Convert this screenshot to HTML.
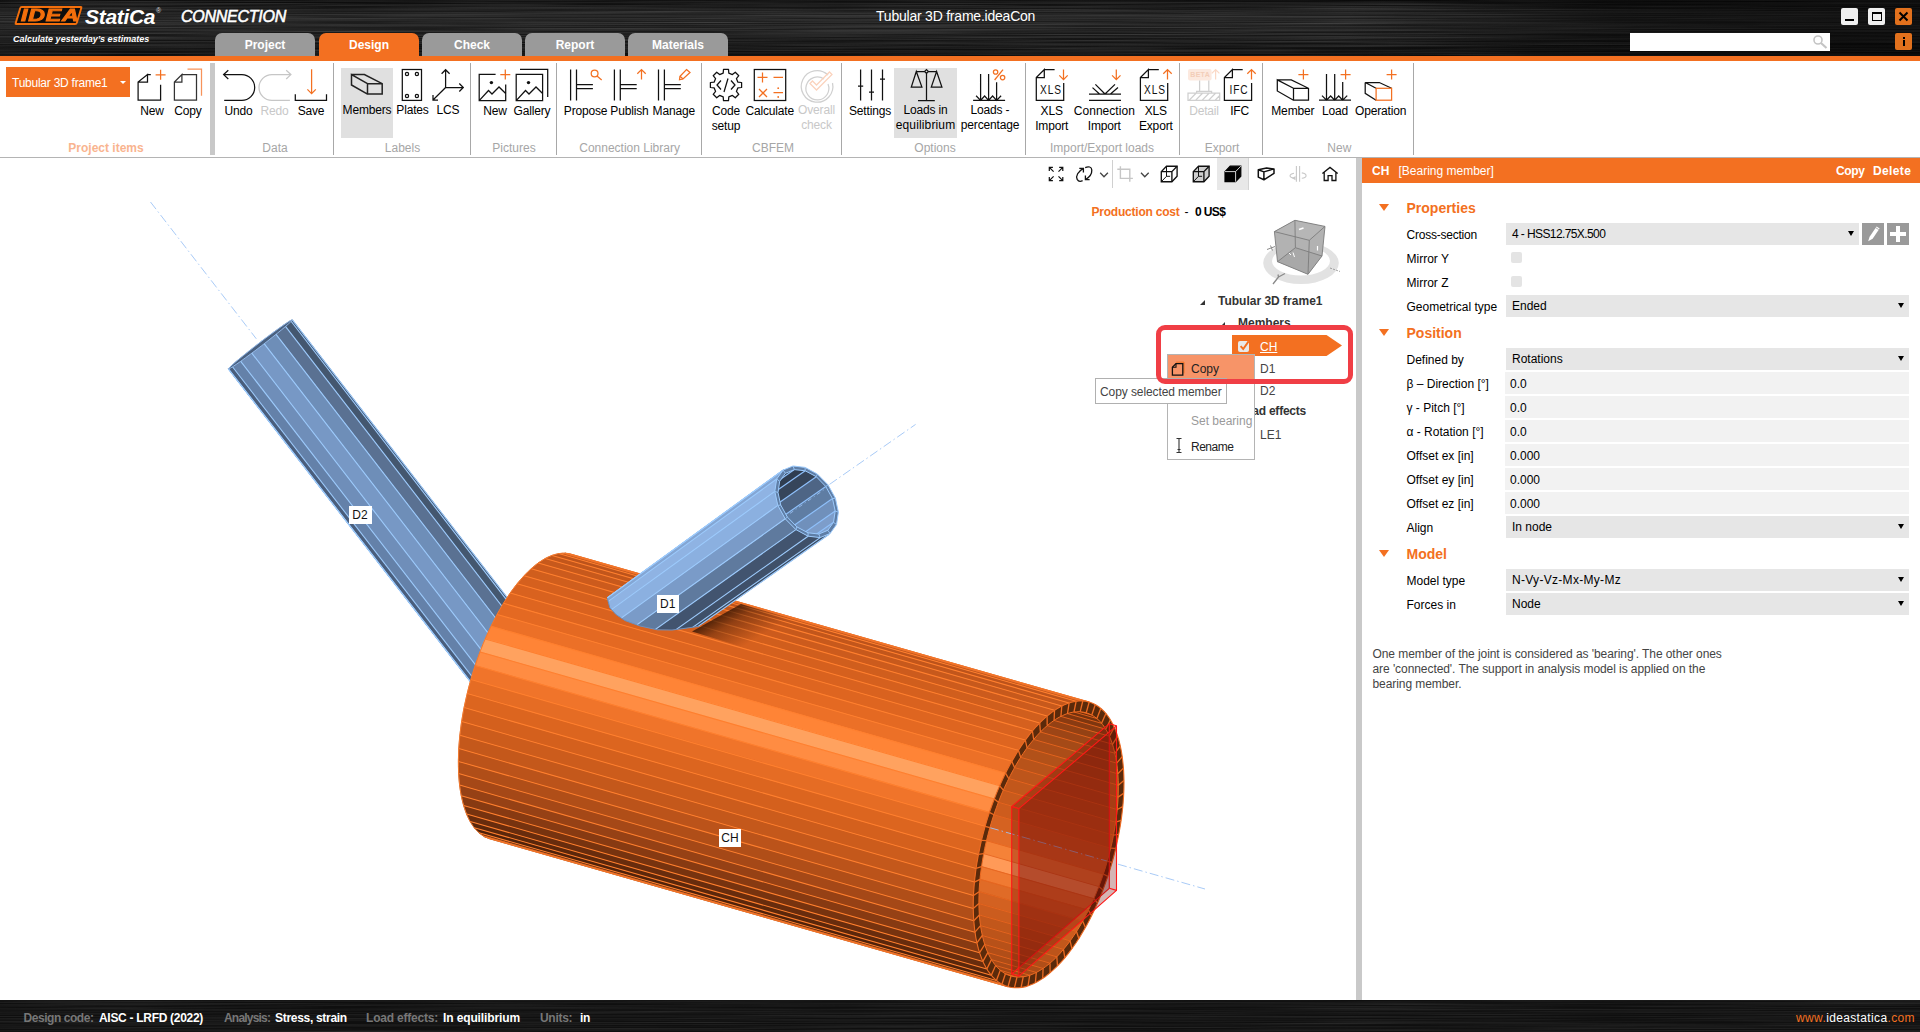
<!DOCTYPE html>
<html lang="en">
<head>
<meta charset="utf-8">
<title>Tubular 3D frame.ideaCon</title>
<style>
*{box-sizing:border-box;margin:0;padding:0}
html,body{width:1920px;height:1032px;overflow:hidden;background:#fff}
body{font-family:"Liberation Sans",sans-serif;font-size:12px;color:#000;position:relative}
.abs{position:absolute}
.t{position:absolute;white-space:nowrap;line-height:14px}
svg{position:absolute;overflow:visible}
/* header */
#hdr{position:absolute;left:0;top:0;width:1920px;height:56px;background:#171717;overflow:hidden}
#oline{position:absolute;left:0;top:56px;width:1920px;height:5px;background:#f37021}
.tab{position:absolute;top:33px;height:23px;width:100px;background:#9a9a9a;border-radius:7px 7px 0 0;color:#fff;font-weight:bold;font-size:12px;text-align:center;line-height:24px}
.tab.on{background:#f37021}
/* ribbon */
#rib{position:absolute;left:0;top:61px;width:1920px;height:96px;background:#fff}
#ribline{position:absolute;left:0;top:157px;width:1920px;height:1px;background:#b4b4b4}
.sep{position:absolute;top:63px;height:92px;width:1px;background:#a8a8a8}
.lbl{position:absolute;white-space:nowrap;line-height:15px;font-size:12px;letter-spacing:-0.17px;text-align:center;color:#000;transform:translateX(-50%)}
.lbl.dis{color:#c8c8c8}
.grp{position:absolute;white-space:nowrap;line-height:14px;font-size:12px;color:#a6a6a6;top:141px;transform:translateX(-50%)}
/* status */
#stat{position:absolute;left:0;top:1000px;width:1920px;height:32px;background:#101010;overflow:hidden}
#stat .t{top:11px;font-weight:bold;font-size:12px;letter-spacing:-0.3px}
/* right panel */
#split{position:absolute;left:1356px;top:158px;width:6px;height:842px;background:#c9c9c9}
#rp{position:absolute;left:1362px;top:158px;width:558px;height:842px;background:#fff}
#rph{position:absolute;left:0;top:0;width:558px;height:25px;background:#f37021;color:#fff}

#rp .l{position:absolute;left:44.5px;margin-top:1px;white-space:nowrap;line-height:14px;font-size:12px;color:#000}
#rp .f{position:absolute;left:144px;width:403px;height:22px;background:#e6e6e6}
#rp .f.n{left:143px;width:404px;background:#f2f2f2}
#rp .f span{position:absolute;left:6px;top:3.5px;line-height:14px;white-space:nowrap}
#rp .f.n span{left:5px;top:4.5px}
#rp .f i{position:absolute;right:5px;top:8px;width:0;height:0;border-left:3.5px solid transparent;border-right:3.5px solid transparent;border-top:5px solid #000}
#rp .h{position:absolute;left:44.5px;white-space:nowrap;font-size:14px;line-height:16px;font-weight:bold;color:#f37021}
#rp .tri{position:absolute;left:17px;width:0;height:0;border-left:5.5px solid transparent;border-right:5.5px solid transparent;border-top:7px solid #f37021}
#rp .cb{position:absolute;left:149px;width:11px;height:11px;border-radius:2px;background:#e4e4e4}
</style>
</head>
<body>
<div id="hdr">
<svg width="1920" height="56" style="left:0;top:0"><defs>
<filter id="brush" x="0" y="0" width="100%" height="100%"><feTurbulence type="fractalNoise" baseFrequency="0.004 0.85" numOctaves="3" seed="7" result="n"/><feColorMatrix type="matrix" values="0 0 0 0 1  0 0 0 0 1  0 0 0 0 1  0.9 0 0 0 -0.28"/></filter>
<linearGradient id="hg" x1="0" y1="0" x2="0" y2="1"><stop offset="0" stop-color="#0a0a0a"/><stop offset="0.25" stop-color="#1e1e1e"/><stop offset="0.5" stop-color="#1c1c1c"/><stop offset="0.8" stop-color="#111"/><stop offset="1" stop-color="#0c0c0c"/></linearGradient>
<linearGradient id="hx" x1="0" y1="0" x2="1" y2="0"><stop offset="0" stop-color="#000" stop-opacity="0"/><stop offset="0.7" stop-color="#000" stop-opacity="0"/><stop offset="0.85" stop-color="#000" stop-opacity="0.45"/><stop offset="1" stop-color="#000" stop-opacity="0.55"/></linearGradient>
</defs>
<rect width="1920" height="56" fill="url(#hg)"/>
<rect width="1920" height="56" filter="url(#brush)" opacity="0.3"/>
<rect width="1920" height="56" fill="url(#hx)"/>
</svg>
<!-- logo -->
<div class="abs" style="left:17px;top:6px;width:63px;height:19px;border:2px solid #f36f0c;border-radius:2px;transform:skewX(-17deg);background:#0d0d0d"></div>
<div class="t" style="left:20.5px;top:6px;font-size:17px;line-height:19px;font-weight:bold;font-style:italic;color:#f36f0c;-webkit-text-stroke:0.9px #f36f0c;letter-spacing:0.6px;transform-origin:0 0;transform:scaleX(1.36)">IDEA</div>
<div class="t" style="left:85px;top:4.5px;font-size:21px;line-height:24px;font-weight:bold;font-style:italic;color:#fff;letter-spacing:-0.3px">StatiCa</div>
<div class="t" style="left:156px;top:7px;font-size:7px;line-height:8px;color:#ddd">®</div>
<div class="t" style="left:181px;top:8px;font-size:16px;line-height:18px;font-style:italic;color:#fff;letter-spacing:-0.25px;-webkit-text-stroke:0.55px #fff">CONNECTION</div>
<div class="t" style="left:13px;top:34px;font-size:9px;line-height:11px;font-style:italic;font-weight:bold;color:#fff;letter-spacing:0.01px">Calculate yesterday’s estimates</div>
<!-- tabs -->
<div class="tab" style="left:215px">Project</div>
<div class="tab on" style="left:319px">Design</div>
<div class="tab" style="left:422px">Check</div>
<div class="tab" style="left:525px">Report</div>
<div class="tab" style="left:628px">Materials</div>
<div class="t" style="left:876px;top:8px;font-size:14px;line-height:16px;color:#fff;letter-spacing:-0.22px">Tubular 3D frame.ideaCon</div>
<!-- window buttons -->
<div class="abs" style="left:1841px;top:8px;width:17px;height:17px;background:#efefef;border-radius:2px"><div class="abs" style="left:4px;top:11px;width:9px;height:2px;background:#000"></div></div>
<div class="abs" style="left:1868px;top:8px;width:17px;height:17px;background:#efefef;border-radius:2px"><div class="abs" style="left:4px;top:4px;width:10px;height:9px;border:1.5px solid #000;border-top-width:2.5px"></div></div>
<div class="abs" style="left:1895px;top:8px;width:17px;height:17px;background:#e2711d;border-radius:2px"><svg width="17" height="17" style="left:0;top:0"><path d="M4.5 4.5 L12.5 12.5 M12.5 4.5 L4.5 12.5" stroke="#000" stroke-width="2" fill="none"/></svg></div>
<div class="abs" style="left:1630px;top:33px;width:200px;height:18px;background:#fff"></div>
<svg width="20" height="18" style="left:1810px;top:33px"><circle cx="8" cy="7" r="4" fill="none" stroke="#c4c4c4" stroke-width="1.6"/><path d="M11 10 L16.5 15" stroke="#c4c4c4" stroke-width="2.2"/></svg>
<div class="abs" style="left:1895px;top:33px;width:17px;height:17px;background:#e2711d;border-radius:2px"><div class="abs" style="left:7.5px;top:4px;width:2px;height:2px;background:#000"></div><div class="abs" style="left:7.5px;top:7px;width:2px;height:6px;background:#000"></div></div>
</div>
<div id="oline"></div>
<div id="rib"></div>
<div class="abs" style="left:341px;top:68px;width:52px;height:70px;background:#e0e0e0"></div>
<div class="abs" style="left:894px;top:68px;width:63px;height:70px;background:#e0e0e0"></div>
<div class="abs" style="left:6px;top:67px;width:124px;height:30px;background:#f37021"></div>
<div class="t" style="left:12px;top:76px;color:#fff;font-size:12px;letter-spacing:-0.24px">Tubular 3D frame1</div>
<div class="abs" style="left:119.5px;top:80.5px;width:0;height:0;border-left:3px solid transparent;border-right:3px solid transparent;border-top:3.5px solid #fff"></div>
<div class="abs" style="left:210px;top:63px;width:5px;height:92px;background:#c8c8c8"></div>
<div class="sep" style="left:333px"></div>
<div class="sep" style="left:470px"></div>
<div class="sep" style="left:556px"></div>
<div class="sep" style="left:701px"></div>
<div class="sep" style="left:841px"></div>
<div class="sep" style="left:1025px"></div>
<div class="sep" style="left:1179px"></div>
<div class="sep" style="left:1262px"></div>
<div class="sep" style="left:1413px"></div>
<div class="lbl" style="left:152px;top:103.5px">New</div>
<div class="lbl" style="left:188px;top:103.5px">Copy</div>
<div class="lbl" style="left:238.4px;top:103.5px">Undo</div>
<div class="lbl dis" style="left:274.5px;top:103.5px">Redo</div>
<div class="lbl" style="left:311px;top:103.5px">Save</div>
<div class="lbl" style="left:367px;top:102.5px">Members</div>
<div class="lbl" style="left:412.5px;top:102.5px">Plates</div>
<div class="lbl" style="left:448px;top:102.5px">LCS</div>
<div class="lbl" style="left:495px;top:103.5px">New</div>
<div class="lbl" style="left:532px;top:103.5px">Gallery</div>
<div class="lbl" style="left:585.6px;top:103.5px">Propose</div>
<div class="lbl" style="left:629.4px;top:103.5px">Publish</div>
<div class="lbl" style="left:673.8px;top:103.5px">Manage</div>
<div class="lbl" style="left:726px;top:103.5px">Code<br>setup</div>
<div class="lbl" style="left:769.7px;top:103.5px">Calculate</div>
<div class="lbl dis" style="left:816.5px;top:102.5px">Overall<br>check</div>
<div class="lbl" style="left:870px;top:103.5px">Settings</div>
<div class="lbl" style="left:925.5px;top:102.5px">Loads in<br><span style="letter-spacing:0.15px">equilibrium</span></div>
<div class="lbl" style="left:990px;top:102.5px">Loads -<br>percentage</div>
<div class="lbl" style="left:1051.7px;top:103.5px">XLS<br>Import</div>
<div class="lbl" style="left:1104.3px;top:103.5px"><span style="letter-spacing:0.04px">Connection</span><br>Import</div>
<div class="lbl" style="left:1155.8px;top:103.5px">XLS<br>Export</div>
<div class="lbl dis" style="left:1204px;top:103.5px">Detail</div>
<div class="lbl" style="left:1239.6px;top:103.5px">IFC</div>
<div class="lbl" style="left:1292.8px;top:103.5px">Member</div>
<div class="lbl" style="left:1335px;top:103.5px">Load</div>
<div class="lbl" style="left:1380.6px;top:103.5px">Operation</div>
<div class="grp" style="left:106px;color:#f9b48f;font-weight:bold">Project items</div>
<div class="grp" style="left:275px;">Data</div>
<div class="grp" style="left:402.5px;">Labels</div>
<div class="grp" style="left:514px;">Pictures</div>
<div class="grp" style="left:629.6px;">Connection Library</div>
<div class="grp" style="left:773px;">CBFEM</div>
<div class="grp" style="left:935px;">Options</div>
<div class="grp" style="left:1102px;">Import/Export loads</div>
<div class="grp" style="left:1222px;">Export</div>
<div class="grp" style="left:1339.3px;">New</div>
<div class="t" style="left:1050.8px;top:82.5px;font-size:13px;line-height:14px;transform:translateX(-50%) scaleX(0.78);letter-spacing:1.2px;color:#111">XLS</div>
<div class="t" style="left:1154.8px;top:82.5px;font-size:13px;line-height:14px;transform:translateX(-50%) scaleX(0.78);letter-spacing:1.2px;color:#111">XLS</div>
<div class="t" style="left:1238.8px;top:82.5px;font-size:13px;line-height:14px;transform:translateX(-50%) scaleX(0.78);letter-spacing:1.2px;color:#111">IFC</div>
<div class="t" style="left:1190.3px;top:71px;font-size:7px;line-height:8px;font-weight:bold;color:#f3cdb8;letter-spacing:0.3px;z-index:3">BETA</div>
<svg width="1920" height="100" style="left:0;top:61px" viewBox="0 61 1920 100" fill="none" stroke="#111" stroke-width="1.25" stroke-linejoin="miter">
<path d="M147.5 74.5H150.8M160.6 84.8V100.1H138.1V82L147.5 74.5V82H138.1"/><path d="M155.6 74.8H165.6M160.6 69.8V79.8" stroke="#f37021"/>
<path d="M181.9 74.5H196.5V100.1H174.4V82L181.9 74.5V82H174.4" stroke="#333"/><path d="M187.5 69.2H201.5V95.8" stroke="#f7935a"/>
<path d="M228.3 70.2L223.6 74.6L228.3 79M223.6 74.6H241.8A12.9 12.9 0 0 1 241.8 100.4H224.2"/>
<path d="M286.2 70.2L290.9 74.6L286.2 79M290.9 74.6H271.9A12.9 12.9 0 0 0 271.9 100.4H289.9" stroke="#c6c6c6"/>
<path d="M311.6 69.2V93.6M307.40000000000003 89.39999999999999L311.6 93.6L315.8 89.39999999999999" stroke="#f37021"/><path d="M295.3 94.3V100.4H326.5V94.3"/>
<path d="M351.5 74.6H364.4L382.2 83.7V94.1H367.5V83.7H382.2M367.5 83.7L351.5 74.6V85L367.5 94.1" stroke-width="1.5" stroke="#222"/>
<rect x="402.3" y="69.5" width="19.2" height="30.9"/><circle cx="407" cy="74" r="1.6"/><circle cx="416.9" cy="74" r="1.6"/><circle cx="407" cy="95.9" r="1.6"/><circle cx="416.9" cy="95.9" r="1.6"/>
<path d="M445.6 87.5V69.7M441.6 73.7L445.6 69.7L449.6 73.7M445.6 87.5H463.3M459.3 83.5L463.3 87.5L459.3 91.5M445.6 87.5L433 100M433 95V100H438"/>
<path d="M495.6 74.4H479.2V100.6H505.7V84.5M479.2 100.6L488.5 90.5L492 94L499 87L505.7 93.5"/><circle cx="491.4" cy="82.6" r="1.7" fill="#111" stroke="none"/><path d="M500.3 74.6H510.3M505.3 69.6V79.6" stroke="#f37021"/>
<path d="M516.2 74.4H542.6V100.6H516.2ZM516.2 100.6L525.5 90.5L529 94L536 87L542.6 93.5M520 69.4H547.7V96.9"/><circle cx="528.5" cy="82.6" r="1.7" fill="#111" stroke="none"/>
<path d="M570.6 69.4V100.6M576.5 69.4V100.6M576.5 84.6H592.9M576.5 88.5H592.9"/>
<path d="M614.4 69.4V100.6M620.3 69.4V100.6M620.3 84.6H636.6999999999999M620.3 88.5H636.6999999999999"/>
<path d="M658.5 69.4V100.6M664.4 69.4V100.6M664.4 84.6H680.8M664.4 88.5H680.8"/>
<circle cx="594.6" cy="73.4" r="3.4" stroke="#f37021"/><path d="M597 76L601.7 80" stroke="#f37021"/>
<path d="M641.5 79.6V69.6M637.3 73.8L641.5 69.6L645.7 73.8" stroke="#f37021"/>
<path d="M686.5 69.6L690 72.5L683 79L679.5 79.8L680 76.2Z" stroke="#f37021"/><path d="M680 76.2L683 79" stroke="#f37021"/>
<path d="M723.2 73.1L723.5 69.4L728.5 69.4L728.8 73.1L732.4 74.6L735.3 72.2L738.8 75.7L736.4 78.6L737.9 82.2L741.6 82.5L741.6 87.5L737.9 87.8L736.4 91.4L738.8 94.3L735.3 97.8L732.4 95.4L728.8 96.9L728.5 100.6L723.5 100.6L723.2 96.9L719.6 95.4L716.7 97.8L713.2 94.3L715.6 91.4L714.1 87.8L710.4 87.5L710.4 82.5L714.1 82.2L715.6 78.6L713.2 75.7L716.7 72.2L719.6 74.6Z" stroke-linejoin="round"/>
<path d="M721 80.5L717 85L721 89.5M731 80.5L735 85L731 89.5M728 78.5L724 92"/>
<rect x="754.3" y="69.5" width="31.4" height="31"/>
<path d="M757.5 77.4H767.5M762.5 72.4V82.4M773.5 77.4H783M759 89L767 97M767 89L759 97M773.5 92.6H783" stroke="#f37021"/><circle cx="778.2" cy="88.2" r="0.9" fill="#f37021" stroke="none"/><circle cx="778.2" cy="97" r="0.9" fill="#f37021" stroke="none"/>
<path d="M828 75A15.8 15.8 0 1 0 832.5 83" stroke="#d0d0d0"/><path d="M824 79A11.5 11.5 0 1 0 828 84" stroke="#d0d0d0"/><path d="M810 83.5L816.5 90L832 74.5L829.5 72L816.5 85L812.5 81Z" stroke="#fbd3bd"/>
<path d="M860.6 69.4V100.6M871.5 69.4V100.6M882.5 69.4V100.6M858 86H863.2M869 92H874M880 79H885" />
<path d="M916.3 71.5H924.7M928.3 71.5H936.6M926.5 73.3V100.5M918 100.5H934.8M916.3 71.5L911.3 87.1H921.9ZM936.6 71.5L931.3 87.1H941.9Z"/><path d="M926.5 69.6L928.4 71.5L926.5 73.4L924.6 71.5Z"/>
<path d="M980.6 74V100.4M988.6 74V100.4M996.6 82.2V100.4M973.1 100.4H1005.1M976.1 95.8L980.6 100.4L984.6 96L988.6 100.4L992.6 96L996.6 100.4L1001.1 95.8"/>
<circle cx="995.6" cy="72" r="2.2" stroke="#f37021"/><circle cx="1002.6" cy="77.6" r="2.2" stroke="#f37021"/><path d="M1003 69.6L994.6 80" stroke="#f37021"/>
<path d="M1044.3 69.5H1054.6M1063.7 83V100.3H1036.3V77.5L1044.3 69.5V77.5H1036.3"/>
<path d="M1063.5 69.6V79.6M1059.3 75.39999999999999L1063.5 79.6L1067.7 75.39999999999999" stroke="#f37021"/>
<path d="M1089 94H1121M1089 100.4H1121M1105 94L1095.4 84.4M1105 94L1115 84.4M1099.5 94L1092.5 87.6M1110.5 94L1118 87.6"/>
<path d="M1116.3 69.6V79.6M1112.1 75.39999999999999L1116.3 79.6L1120.5 75.39999999999999" stroke="#f37021"/>
<path d="M1148.4 69.5H1158.8M1167.7 83V100.3H1140.4V77.5L1148.4 69.5V77.5H1140.4"/>
<path d="M1167.5 79.6V69.6M1163.3 73.8L1167.5 69.6L1171.7 73.8" stroke="#f37021"/>
<rect x="1188" y="69" width="23.6" height="11.6" rx="2" fill="#fce9df" stroke="none"/>
<path d="M1215.6 79.6V69.6M1211.8 73.39999999999999L1215.6 69.6L1219.3999999999999 73.39999999999999" stroke="#fbd9c6"/>
<path d="M1199.6 80.6V91.3M1208.8 80.6V91.3M1196.6 93V91.3H1211.6V93M1188 93.2H1219.7V100.4H1188Z M1189 100.4L1196 93.2M1195.5 100.4L1202.5 93.2M1202 100.4L1209 93.2M1208.5 100.4L1215.5 93.2M1215 100.4L1219.7 95.5" stroke="#cfcfcf"/>
<path d="M1232.4 69.5H1242.7M1251.6 83V100.3H1224.4V77.5L1232.4 69.5V77.5H1224.4"/>
<path d="M1251.5 79.6V69.6M1247.3 73.8L1251.5 69.6L1255.7 73.8" stroke="#f37021"/>
<path d="M1277.3 79.9H1291.3L1308.5 88.3V100.2H1293.5V88.3H1308.5M1293.5 88.3L1277.3 79.9V91L1293.5 100.2"/><path d="M1298.4 74.5H1308.4M1303.4 69.5V79.5" stroke="#f37021"/>
<path d="M1326.5 74V100.2M1334.7 74V100.2M1342.7 82V100.2M1319 100.2H1351M1322 95.6L1326.5 100.2L1330.6 96L1334.7 100.2L1338.7 96L1342.7 100.2L1347.2 95.6"/><path d="M1340.6 74.5H1350.6M1345.6 69.5V79.5" stroke="#f37021"/>
<path d="M1376.1 88.3L1365.2 82.5H1379.3L1391.6 88.3M1365.2 82.5V93.4L1376.1 100.2"/><rect x="1376.1" y="88.3" width="15.5" height="11.9" stroke="#f37021"/><path d="M1386.6 74.5H1396.6M1391.6 69.5V79.5" stroke="#f37021"/>
</svg>
<div id="ribline"></div>
<div id="view">
<!--MODEL_START-->
<svg width="1356" height="842" viewBox="0 158 1356 842" style="left:0;top:158px;overflow:hidden" shape-rendering="auto">
<g id="d2">
<polygon points="292.3,319.8 549.3,652.0 547.5,652.7 290.5,320.5" fill="#394961" stroke="#394961" stroke-width="0.6"/>
<polygon points="290.5,320.5 547.5,652.7 541.2,656.9 284.1,324.7" fill="#44576f" stroke="#44576f" stroke-width="0.6"/>
<polygon points="284.1,324.7 541.2,656.9 531.2,664.0 274.1,331.8" fill="#5a7192" stroke="#5a7192" stroke-width="0.6"/>
<polygon points="274.1,331.8 531.2,664.0 519.1,673.1 262.0,340.8" fill="#6e8eb8" stroke="#6e8eb8" stroke-width="0.6"/>
<polygon points="262.0,340.8 519.1,673.1 506.7,682.7 249.7,350.4" fill="#7798c5" stroke="#7798c5" stroke-width="0.6"/>
<polygon points="249.7,350.4 506.7,682.7 496.0,691.3 239.0,359.1" fill="#6f8eb9" stroke="#6f8eb9" stroke-width="0.6"/>
<polygon points="239.0,359.1 496.0,691.3 488.5,697.8 231.5,365.5" fill="#6481a9" stroke="#6481a9" stroke-width="0.6"/>
<polygon points="231.5,365.5 488.5,697.8 485.5,701.0 228.4,368.8" fill="#4a5e7c" stroke="#4a5e7c" stroke-width="0.6"/>
<polygon points="228.4,368.8 485.5,701.0 485.4,701.2 228.4,369.0" fill="#40536d" stroke="#40536d" stroke-width="0.6"/>
<path d="M292.3,319.8L549.3,652.0" stroke="#9ccafc" stroke-width="1.1" fill="none"/>
<path d="M290.5,320.5L547.5,652.7" stroke="#9ccafc" stroke-width="1.1" fill="none"/>
<path d="M284.1,324.7L541.2,656.9" stroke="#9ccafc" stroke-width="1.1" fill="none"/>
<path d="M274.1,331.8L531.2,664.0" stroke="#9ccafc" stroke-width="1.1" fill="none"/>
<path d="M262.0,340.8L519.1,673.1" stroke="#9ccafc" stroke-width="1.1" fill="none"/>
<path d="M249.7,350.4L506.7,682.7" stroke="#9ccafc" stroke-width="1.1" fill="none"/>
<path d="M239.0,359.1L496.0,691.3" stroke="#9ccafc" stroke-width="1.1" fill="none"/>
<path d="M231.5,365.5L488.5,697.8" stroke="#9ccafc" stroke-width="1.1" fill="none"/>
<path d="M228.4,368.8L485.5,701.0" stroke="#9ccafc" stroke-width="1.1" fill="none"/>
<path d="M228.4,369.0L485.4,701.2" stroke="#9ccafc" stroke-width="1.1" fill="none"/>
<polygon points="292.3,319.8 291.6,319.9 290.0,320.8 287.5,322.4 284.1,324.7 280.0,327.5 275.4,330.9 270.2,334.7 264.8,338.7 259.2,343.0 253.7,347.3 248.4,351.5 243.4,355.5 239.0,359.1 235.2,362.3 232.1,365.0 229.9,367.0 228.7,368.4 228.4,369.0 229.1,368.9 230.7,368.0 233.2,366.4 236.6,364.1 240.7,361.3 245.3,357.9 250.5,354.1 255.9,350.1 261.5,345.8 267.0,341.5 272.3,337.3 277.3,333.3 281.7,329.7 285.5,326.5 288.6,323.8 290.8,321.8 292.0,320.4 292.3,319.8" fill="#4a607f" stroke="#9fc6f6" stroke-width="0.8"/>
</g>
<g id="ch">
<polygon points="571.1,554.2 1089.2,702.1 1082.8,701.0 565.1,553.2" fill="#af4b18" stroke="#af4b18" stroke-width="0.7"/>
<polygon points="565.1,553.2 1082.8,701.0 1076.1,701.3 558.7,553.6" fill="#b54e19" stroke="#b54e19" stroke-width="0.7"/>
<polygon points="558.7,553.6 1076.1,701.3 1069.1,703.0 552.1,555.4" fill="#bc531b" stroke="#bc531b" stroke-width="0.7"/>
<polygon points="552.1,555.4 1069.1,703.0 1061.8,706.0 545.2,558.5" fill="#c2561b" stroke="#c2561b" stroke-width="0.7"/>
<polygon points="545.2,558.5 1061.8,706.0 1054.5,710.3 538.2,563.0" fill="#c7591c" stroke="#c7591c" stroke-width="0.7"/>
<polygon points="538.2,563.0 1054.5,710.3 1047.1,716.0 531.2,568.7" fill="#cc5b1d" stroke="#cc5b1d" stroke-width="0.7"/>
<polygon points="531.2,568.7 1047.1,716.0 1039.7,722.9 524.1,575.7" fill="#d05e1d" stroke="#d05e1d" stroke-width="0.7"/>
<polygon points="524.1,575.7 1039.7,722.9 1032.4,731.0 517.1,583.8" fill="#d5601e" stroke="#d5601e" stroke-width="0.7"/>
<polygon points="517.1,583.8 1032.4,731.0 1025.3,740.1 510.2,593.1" fill="#d9621f" stroke="#d9621f" stroke-width="0.7"/>
<polygon points="510.2,593.1 1025.3,740.1 1018.4,750.3 503.5,603.3" fill="#de6520" stroke="#de6520" stroke-width="0.7"/>
<polygon points="503.5,603.3 1018.4,750.3 1011.8,761.3 497.1,614.4" fill="#e46922" stroke="#e46922" stroke-width="0.7"/>
<polygon points="497.1,614.4 1011.8,761.3 1005.5,773.2 491.0,626.3" fill="#ec7027" stroke="#ec7027" stroke-width="0.7"/>
<polygon points="491.0,626.3 1005.5,773.2 999.7,785.8 485.2,638.9" fill="#ff8436" stroke="#ff8436" stroke-width="0.7"/>
<polygon points="485.2,638.9 999.7,785.8 994.3,798.9 480.0,652.0" fill="#ffa25f" stroke="#ffa25f" stroke-width="0.7"/>
<polygon points="480.0,652.0 994.3,798.9 989.4,812.4 475.1,665.6" fill="#ff8c42" stroke="#ff8c42" stroke-width="0.7"/>
<polygon points="475.1,665.6 989.4,812.4 985.1,826.3 470.9,679.5" fill="#f0742a" stroke="#f0742a" stroke-width="0.7"/>
<polygon points="470.9,679.5 985.1,826.3 981.5,840.3 467.2,693.5" fill="#e56c24" stroke="#e56c24" stroke-width="0.7"/>
<polygon points="467.2,693.5 981.5,840.3 978.4,854.4 464.1,707.6" fill="#dc651f" stroke="#dc651f" stroke-width="0.7"/>
<polygon points="464.1,707.6 978.4,854.4 976.1,868.4 461.7,721.5" fill="#d4601d" stroke="#d4601d" stroke-width="0.7"/>
<polygon points="461.7,721.5 976.1,868.4 974.4,882.1 459.9,735.2" fill="#cc5c1c" stroke="#cc5c1c" stroke-width="0.7"/>
<polygon points="459.9,735.2 974.4,882.1 973.5,895.5 458.8,748.6" fill="#c4581b" stroke="#c4581b" stroke-width="0.7"/>
<polygon points="458.8,748.6 973.5,895.5 973.3,908.4 458.4,761.4" fill="#bb531a" stroke="#bb531a" stroke-width="0.7"/>
<polygon points="458.4,761.4 973.3,908.4 973.8,920.7 458.6,773.6" fill="#b04e18" stroke="#b04e18" stroke-width="0.7"/>
<polygon points="458.6,773.6 973.8,920.7 975.0,932.2 459.6,785.1" fill="#a54817" stroke="#a54817" stroke-width="0.7"/>
<polygon points="459.6,785.1 975.0,932.2 976.9,942.9 461.3,795.7" fill="#964115" stroke="#964115" stroke-width="0.7"/>
<polygon points="461.3,795.7 976.9,942.9 979.6,952.7 463.6,805.4" fill="#873a12" stroke="#873a12" stroke-width="0.7"/>
<polygon points="463.6,805.4 979.6,952.7 982.9,961.4 466.6,814.0" fill="#77330f" stroke="#77330f" stroke-width="0.7"/>
<polygon points="466.6,814.0 982.9,961.4 986.8,969.0 470.2,821.5" fill="#682c0d" stroke="#682c0d" stroke-width="0.7"/>
<polygon points="470.2,821.5 986.8,969.0 991.3,975.3 474.3,827.7" fill="#5b270b" stroke="#5b270b" stroke-width="0.7"/>
<polygon points="474.3,827.7 991.3,975.3 996.4,980.4 479.0,832.8" fill="#50220a" stroke="#50220a" stroke-width="0.7"/>
<polygon points="479.0,832.8 996.4,980.4 1001.9,984.3 484.2,836.5" fill="#491f09" stroke="#491f09" stroke-width="0.7"/>
<polygon points="484.2,836.5 1001.9,984.3 1008.0,986.7 489.9,838.8" fill="#461e08" stroke="#461e08" stroke-width="0.7"/>
<path d="M571.1,554.2L1089.2,702.1" stroke="#ff7f2e" stroke-width="1.05" fill="none"/>
<path d="M565.1,553.2L1082.8,701.0" stroke="#ff7f2e" stroke-width="1.05" fill="none"/>
<path d="M558.7,553.6L1076.1,701.3" stroke="#ff7f2e" stroke-width="1.05" fill="none"/>
<path d="M552.1,555.4L1069.1,703.0" stroke="#ff7f2e" stroke-width="1.05" fill="none"/>
<path d="M545.2,558.5L1061.8,706.0" stroke="#ff7f2e" stroke-width="1.05" fill="none"/>
<path d="M538.2,563.0L1054.5,710.3" stroke="#ff7f2e" stroke-width="1.05" fill="none"/>
<path d="M531.2,568.7L1047.1,716.0" stroke="#ff7f2e" stroke-width="1.05" fill="none"/>
<path d="M524.1,575.7L1039.7,722.9" stroke="#ff7f2e" stroke-width="1.05" fill="none"/>
<path d="M517.1,583.8L1032.4,731.0" stroke="#ff7f2e" stroke-width="1.05" fill="none"/>
<path d="M510.2,593.1L1025.3,740.1" stroke="#ff7f2e" stroke-width="1.05" fill="none"/>
<path d="M503.5,603.3L1018.4,750.3" stroke="#ff7f2e" stroke-width="1.05" fill="none"/>
<path d="M497.1,614.4L1011.8,761.3" stroke="#ff7f2e" stroke-width="1.05" fill="none"/>
<path d="M491.0,626.3L1005.5,773.2" stroke="#ff7f2e" stroke-width="1.05" fill="none"/>
<path d="M485.2,638.9L999.7,785.8" stroke="#ff7f2e" stroke-width="1.05" fill="none"/>
<path d="M480.0,652.0L994.3,798.9" stroke="#ff7f2e" stroke-width="1.05" fill="none"/>
<path d="M475.1,665.6L989.4,812.4" stroke="#ff7f2e" stroke-width="1.05" fill="none"/>
<path d="M470.9,679.5L985.1,826.3" stroke="#ff7f2e" stroke-width="1.05" fill="none"/>
<path d="M467.2,693.5L981.5,840.3" stroke="#ff7f2e" stroke-width="1.05" fill="none"/>
<path d="M464.1,707.6L978.4,854.4" stroke="#ff7f2e" stroke-width="1.05" fill="none"/>
<path d="M461.7,721.5L976.1,868.4" stroke="#ff7f2e" stroke-width="1.05" fill="none"/>
<path d="M459.9,735.2L974.4,882.1" stroke="#ff7f2e" stroke-width="1.05" fill="none"/>
<path d="M458.8,748.6L973.5,895.5" stroke="#ff7f2e" stroke-width="1.05" fill="none"/>
<path d="M458.4,761.4L973.3,908.4" stroke="#ff7f2e" stroke-width="1.05" fill="none"/>
<path d="M458.6,773.6L973.8,920.7" stroke="#ff7f2e" stroke-width="1.05" fill="none"/>
<path d="M459.6,785.1L975.0,932.2" stroke="#ff7f2e" stroke-width="1.05" fill="none"/>
<path d="M461.3,795.7L976.9,942.9" stroke="#ff7f2e" stroke-width="1.05" fill="none"/>
<path d="M463.6,805.4L979.6,952.7" stroke="#ff7f2e" stroke-width="1.05" fill="none"/>
<path d="M466.6,814.0L982.9,961.4" stroke="#ff7f2e" stroke-width="1.05" fill="none"/>
<path d="M470.2,821.5L986.8,969.0" stroke="#ff7f2e" stroke-width="1.05" fill="none"/>
<path d="M474.3,827.7L991.3,975.3" stroke="#ff7f2e" stroke-width="1.05" fill="none"/>
<path d="M479.0,832.8L996.4,980.4" stroke="#ff7f2e" stroke-width="1.05" fill="none"/>
<path d="M484.2,836.5L1001.9,984.3" stroke="#ff7f2e" stroke-width="1.05" fill="none"/>
<path d="M489.9,838.8L1008.0,986.7" stroke="#ff7f2e" stroke-width="1.05" fill="none"/>
<path d="M569.0,553.7L1087.0,701.5" stroke="#f0742a" stroke-width="0.6" fill="none"/>
<path d="M566.9,553.3L1084.7,701.2" stroke="#f0742a" stroke-width="0.6" fill="none"/>
<path d="M564.7,553.2L1082.4,701.0" stroke="#f0742a" stroke-width="0.6" fill="none"/>
<path d="M562.4,553.2L1080.0,700.9" stroke="#f0742a" stroke-width="0.6" fill="none"/>
<path d="M482.0,835.1L999.5,982.8" stroke="#f0742a" stroke-width="0.6" fill="none"/>
<path d="M483.9,836.3L1001.6,984.0" stroke="#f0742a" stroke-width="0.6" fill="none"/>
<path d="M485.8,837.3L1003.6,985.1" stroke="#f0742a" stroke-width="0.6" fill="none"/>
<path d="M487.8,838.1L1005.8,986.0" stroke="#f0742a" stroke-width="0.6" fill="none"/>
<polyline points="571.1,554.2 568.0,553.5 564.7,553.2 561.3,553.3 557.8,553.8 554.3,554.6 550.7,555.9 547.1,557.5 543.4,559.6 539.6,562.0 535.9,564.7 532.1,567.9 528.3,571.4 524.6,575.2 520.8,579.4 517.1,583.8 513.4,588.6 509.7,593.7 506.1,599.1 502.6,604.7 499.2,610.6 495.8,616.7 492.6,623.1 489.4,629.6 486.4,636.3 483.4,643.2 480.6,650.3 478.0,657.4 475.5,664.7 473.1,672.1 470.9,679.5 468.8,687.0 467.0,694.5 465.3,702.0 463.7,709.4 462.4,716.9 461.2,724.3 460.3,731.6 459.5,738.8 458.9,745.9 458.6,752.9 458.4,759.7 458.4,766.4 458.6,772.8 459.0,779.1 459.6,785.1 460.4,790.9 461.4,796.4 462.6,801.6 464.0,806.6 465.5,811.2 467.2,815.6 469.1,819.6 471.2,823.3 473.4,826.6 475.8,829.6 478.4,832.2 481.0,834.4 483.9,836.3 486.8,837.7 489.9,838.8" fill="none" stroke="#f47a2e" stroke-width="1"/>
<polygon points="1089.2,702.1 1092.5,703.2 1095.6,704.8 1098.7,706.7 1101.5,709.0 1104.3,711.6 1106.8,714.6 1109.3,718.0 1111.5,721.8 1113.6,725.8 1115.5,730.2 1117.2,734.9 1118.8,739.9 1120.1,745.2 1121.3,750.8 1122.2,756.6 1122.9,762.6 1123.5,768.9 1123.8,775.4 1124.0,782.1 1123.9,788.9 1123.6,795.9 1123.1,803.1 1122.4,810.3 1121.5,817.7 1120.4,825.1 1119.1,832.5 1117.6,840.0 1116.0,847.5 1114.1,855.0 1112.1,862.5 1109.9,869.9 1107.5,877.3 1104.9,884.6 1102.2,891.7 1099.4,898.7 1096.4,905.6 1093.3,912.3 1090.1,918.8 1086.7,925.2 1083.2,931.2 1079.7,937.1 1076.1,942.7 1072.4,948.0 1068.6,953.1 1064.8,957.8 1060.9,962.3 1057.0,966.4 1053.0,970.2 1049.1,973.6 1045.1,976.7 1041.2,979.4 1037.3,981.8 1033.4,983.8 1029.6,985.3 1025.8,986.6 1022.1,987.4 1018.4,987.8 1014.8,987.8 1011.4,987.5 1008.0,986.7 1004.7,985.6 1001.6,984.0 998.5,982.1 995.7,979.8 992.9,977.2 990.4,974.2 987.9,970.8 985.7,967.0 983.6,963.0 981.7,958.6 980.0,953.9 978.4,948.9 977.1,943.6 975.9,938.0 975.0,932.2 974.3,926.2 973.7,919.9 973.4,913.4 973.2,906.7 973.3,899.9 973.6,892.9 974.1,885.7 974.8,878.5 975.7,871.1 976.8,863.7 978.1,856.3 979.6,848.8 981.2,841.3 983.1,833.8 985.1,826.3 987.3,818.9 989.7,811.5 992.3,804.2 995.0,797.1 997.8,790.1 1000.8,783.2 1003.9,776.5 1007.1,770.0 1010.5,763.6 1014.0,757.6 1017.5,751.7 1021.1,746.1 1024.8,740.8 1028.6,735.7 1032.4,731.0 1036.3,726.5 1040.2,722.4 1044.2,718.6 1048.1,715.2 1052.1,712.1 1056.0,709.4 1059.9,707.0 1063.8,705.0 1067.6,703.5 1071.4,702.2 1075.1,701.4 1078.8,701.0 1082.4,701.0 1085.8,701.3" fill="#5a2a0b" stroke="#ee6b22" stroke-width="1.1"/>
<clipPath id="chin"><polygon points="1086.2,712.8 1089.2,713.8 1092.1,715.2 1094.9,717.0 1097.6,719.1 1100.1,721.6 1102.5,724.4 1104.7,727.5 1106.8,731.0 1108.7,734.7 1110.5,738.8 1112.1,743.1 1113.5,747.7 1114.7,752.6 1115.8,757.8 1116.7,763.2 1117.4,768.8 1117.9,774.6 1118.2,780.6 1118.3,786.8 1118.2,793.1 1118.0,799.6 1117.5,806.2 1116.9,812.9 1116.0,819.7 1115.0,826.5 1113.8,833.4 1112.5,840.4 1110.9,847.3 1109.2,854.2 1107.3,861.2 1105.3,868.0 1103.1,874.8 1100.7,881.5 1098.2,888.2 1095.6,894.7 1092.8,901.0 1089.9,907.2 1086.9,913.3 1083.8,919.1 1080.7,924.7 1077.4,930.2 1074.0,935.3 1070.6,940.3 1067.1,944.9 1063.5,949.3 1060.0,953.4 1056.3,957.3 1052.7,960.8 1049.1,963.9 1045.4,966.8 1041.8,969.3 1038.1,971.5 1034.6,973.3 1031.0,974.8 1027.5,975.9 1024.0,976.7 1020.7,977.0 1017.4,977.1 1014.1,976.7 1011.0,976.0 1008.0,975.0 1005.1,973.6 1002.3,971.8 999.6,969.7 997.1,967.2 994.7,964.4 992.5,961.3 990.4,957.8 988.5,954.1 986.7,950.0 985.1,945.7 983.7,941.1 982.5,936.2 981.4,931.0 980.5,925.6 979.8,920.0 979.3,914.2 979.0,908.2 978.9,902.0 979.0,895.7 979.2,889.2 979.7,882.6 980.3,875.9 981.2,869.1 982.2,862.3 983.4,855.4 984.7,848.4 986.3,841.5 988.0,834.6 989.9,827.6 991.9,820.8 994.1,814.0 996.5,807.3 999.0,800.6 1001.6,794.1 1004.4,787.8 1007.3,781.6 1010.3,775.5 1013.4,769.7 1016.5,764.1 1019.8,758.6 1023.2,753.5 1026.6,748.5 1030.1,743.9 1033.7,739.5 1037.2,735.4 1040.9,731.5 1044.5,728.0 1048.1,724.9 1051.8,722.0 1055.4,719.5 1059.1,717.3 1062.6,715.5 1066.2,714.0 1069.7,712.9 1073.2,712.1 1076.5,711.8 1079.8,711.7 1083.1,712.1"/></clipPath>
<g clip-path="url(#chin)">
<polygon points="893.9,657.9 1091.0,714.1 1096.6,716.4 899.4,660.1" fill="#62290b" stroke="#62290b" stroke-width="0.7"/>
<polygon points="899.4,660.1 1096.6,716.4 1101.7,719.9 904.6,663.7" fill="#692c0c" stroke="#692c0c" stroke-width="0.7"/>
<polygon points="904.6,663.7 1101.7,719.9 1106.4,724.7 909.3,668.4" fill="#73310d" stroke="#73310d" stroke-width="0.7"/>
<polygon points="909.3,668.4 1106.4,724.7 1110.6,730.6 913.5,674.3" fill="#7e360f" stroke="#7e360f" stroke-width="0.7"/>
<polygon points="913.5,674.3 1110.6,730.6 1114.2,737.6 917.1,681.3" fill="#8a3b12" stroke="#8a3b12" stroke-width="0.7"/>
<polygon points="917.1,681.3 1114.2,737.6 1117.3,745.6 920.1,689.4" fill="#944114" stroke="#944114" stroke-width="0.7"/>
<polygon points="920.1,689.4 1117.3,745.6 1119.7,754.6 922.6,698.4" fill="#9d4516" stroke="#9d4516" stroke-width="0.7"/>
<polygon points="922.6,698.4 1119.7,754.6 1121.5,764.5 924.4,708.3" fill="#a54a17" stroke="#a54a17" stroke-width="0.7"/>
<polygon points="924.4,708.3 1121.5,764.5 1122.6,775.2 925.5,718.9" fill="#ac4d18" stroke="#ac4d18" stroke-width="0.7"/>
<polygon points="925.5,718.9 1122.6,775.2 1123.1,786.6 926.0,730.3" fill="#b25119" stroke="#b25119" stroke-width="0.7"/>
<polygon points="926.0,730.3 1123.1,786.6 1122.9,798.5 925.8,742.2" fill="#b8531a" stroke="#b8531a" stroke-width="0.7"/>
<polygon points="925.8,742.2 1122.9,798.5 1122.0,810.9 924.9,754.6" fill="#bd551b" stroke="#bd551b" stroke-width="0.7"/>
<polygon points="924.9,754.6 1122.0,810.9 1120.5,823.6 923.4,767.3" fill="#c2571b" stroke="#c2571b" stroke-width="0.7"/>
<polygon points="923.4,767.3 1120.5,823.6 1118.3,836.5 921.2,780.3" fill="#c85a1c" stroke="#c85a1c" stroke-width="0.7"/>
<polygon points="921.2,780.3 1118.3,836.5 1115.5,849.5 918.4,793.3" fill="#cd5c1d" stroke="#cd5c1d" stroke-width="0.7"/>
<polygon points="918.4,793.3 1115.5,849.5 1112.1,862.5 915.0,806.3" fill="#d56221" stroke="#d56221" stroke-width="0.7"/>
<polygon points="915.0,806.3 1112.1,862.5 1108.1,875.4 911.0,819.1" fill="#e36c28" stroke="#e36c28" stroke-width="0.7"/>
<polygon points="911.0,819.1 1108.1,875.4 1103.7,887.9 906.5,831.6" fill="#f58238" stroke="#f58238" stroke-width="0.7"/>
<polygon points="906.5,831.6 1103.7,887.9 1098.7,900.0 901.5,843.8" fill="#ff9a58" stroke="#ff9a58" stroke-width="0.7"/>
<polygon points="901.5,843.8 1098.7,900.0 1093.3,911.6 896.1,855.4" fill="#f07a32" stroke="#f07a32" stroke-width="0.7"/>
<polygon points="896.1,855.4 1093.3,911.6 1087.5,922.6 890.3,866.3" fill="#e06b27" stroke="#e06b27" stroke-width="0.7"/>
<polygon points="890.3,866.3 1087.5,922.6 1081.3,932.8 884.2,876.6" fill="#d36121" stroke="#d36121" stroke-width="0.7"/>
<polygon points="884.2,876.6 1081.3,932.8 1074.9,942.2 877.8,886.0" fill="#cb5c1e" stroke="#cb5c1e" stroke-width="0.7"/>
<polygon points="877.8,886.0 1074.9,942.2 1068.3,950.7 871.2,894.4" fill="#c2571b" stroke="#c2571b" stroke-width="0.7"/>
<polygon points="871.2,894.4 1068.3,950.7 1061.6,958.2 864.5,901.9" fill="#bc541a" stroke="#bc541a" stroke-width="0.7"/>
<polygon points="864.5,901.9 1061.6,958.2 1054.8,964.5 857.6,908.3" fill="#b75119" stroke="#b75119" stroke-width="0.7"/>
<polygon points="857.6,908.3 1054.8,964.5 1047.9,969.8 850.8,913.5" fill="#b14e18" stroke="#b14e18" stroke-width="0.7"/>
<polygon points="850.8,913.5 1047.9,969.8 1041.2,973.8 844.0,917.5" fill="#ac4c17" stroke="#ac4c17" stroke-width="0.7"/>
<polygon points="844.0,917.5 1041.2,973.8 1034.5,976.6 837.4,920.3" fill="#a84a17" stroke="#a84a17" stroke-width="0.7"/>
<polygon points="837.4,920.3 1034.5,976.6 1028.0,978.2 830.9,921.9" fill="#a34816" stroke="#a34816" stroke-width="0.7"/>
<polygon points="830.9,921.9 1028.0,978.2 1021.8,978.4 824.6,922.2" fill="#a04616" stroke="#a04616" stroke-width="0.7"/>
<polygon points="824.6,922.2 1021.8,978.4 1015.8,977.4 818.7,921.1" fill="#9c4415" stroke="#9c4415" stroke-width="0.7"/>
<path d="M893.9,657.9L1091.0,714.1" stroke="#e8651f" stroke-width="0.9" fill="none"/>
<path d="M899.4,660.1L1096.6,716.4" stroke="#e8651f" stroke-width="0.9" fill="none"/>
<path d="M904.6,663.7L1101.7,719.9" stroke="#e8651f" stroke-width="0.9" fill="none"/>
<path d="M909.3,668.4L1106.4,724.7" stroke="#e8651f" stroke-width="0.9" fill="none"/>
<path d="M913.5,674.3L1110.6,730.6" stroke="#e8651f" stroke-width="0.9" fill="none"/>
<path d="M917.1,681.3L1114.2,737.6" stroke="#e8651f" stroke-width="0.9" fill="none"/>
<path d="M920.1,689.4L1117.3,745.6" stroke="#e8651f" stroke-width="0.9" fill="none"/>
<path d="M922.6,698.4L1119.7,754.6" stroke="#e8651f" stroke-width="0.9" fill="none"/>
<path d="M924.4,708.3L1121.5,764.5" stroke="#e8651f" stroke-width="0.9" fill="none"/>
<path d="M925.5,718.9L1122.6,775.2" stroke="#e8651f" stroke-width="0.9" fill="none"/>
<path d="M926.0,730.3L1123.1,786.6" stroke="#e8651f" stroke-width="0.9" fill="none"/>
<path d="M925.8,742.2L1122.9,798.5" stroke="#e8651f" stroke-width="0.9" fill="none"/>
<path d="M924.9,754.6L1122.0,810.9" stroke="#e8651f" stroke-width="0.9" fill="none"/>
<path d="M923.4,767.3L1120.5,823.6" stroke="#e8651f" stroke-width="0.9" fill="none"/>
<path d="M921.2,780.3L1118.3,836.5" stroke="#e8651f" stroke-width="0.9" fill="none"/>
<path d="M918.4,793.3L1115.5,849.5" stroke="#e8651f" stroke-width="0.9" fill="none"/>
<path d="M915.0,806.3L1112.1,862.5" stroke="#e8651f" stroke-width="0.9" fill="none"/>
<path d="M911.0,819.1L1108.1,875.4" stroke="#e8651f" stroke-width="0.9" fill="none"/>
<path d="M906.5,831.6L1103.7,887.9" stroke="#e8651f" stroke-width="0.9" fill="none"/>
<path d="M901.5,843.8L1098.7,900.0" stroke="#e8651f" stroke-width="0.9" fill="none"/>
<path d="M896.1,855.4L1093.3,911.6" stroke="#e8651f" stroke-width="0.9" fill="none"/>
<path d="M890.3,866.3L1087.5,922.6" stroke="#e8651f" stroke-width="0.9" fill="none"/>
<path d="M884.2,876.6L1081.3,932.8" stroke="#e8651f" stroke-width="0.9" fill="none"/>
<path d="M877.8,886.0L1074.9,942.2" stroke="#e8651f" stroke-width="0.9" fill="none"/>
<path d="M871.2,894.4L1068.3,950.7" stroke="#e8651f" stroke-width="0.9" fill="none"/>
<path d="M864.5,901.9L1061.6,958.2" stroke="#e8651f" stroke-width="0.9" fill="none"/>
<path d="M857.6,908.3L1054.8,964.5" stroke="#e8651f" stroke-width="0.9" fill="none"/>
<path d="M850.8,913.5L1047.9,969.8" stroke="#e8651f" stroke-width="0.9" fill="none"/>
<path d="M844.0,917.5L1041.2,973.8" stroke="#e8651f" stroke-width="0.9" fill="none"/>
<path d="M837.4,920.3L1034.5,976.6" stroke="#e8651f" stroke-width="0.9" fill="none"/>
<path d="M830.9,921.9L1028.0,978.2" stroke="#e8651f" stroke-width="0.9" fill="none"/>
<path d="M824.6,922.2L1021.8,978.4" stroke="#e8651f" stroke-width="0.9" fill="none"/>
<path d="M818.7,921.1L1015.8,977.4" stroke="#e8651f" stroke-width="0.9" fill="none"/>
<path d="M990,827.7L1112,862.5" stroke="#9ec4f5" stroke-width="0.9" stroke-dasharray="9 3 1.5 3" fill="none"/>
</g>
<path d="M1089.2,702.1L1086.2,712.8" stroke="#ee6b22" stroke-width="1.3"/>
<path d="M1095.3,704.5L1091.8,715.0" stroke="#ee6b22" stroke-width="1.3"/>
<path d="M1100.8,708.4L1096.9,718.6" stroke="#ee6b22" stroke-width="1.3"/>
<path d="M1105.9,713.5L1101.6,723.3" stroke="#ee6b22" stroke-width="1.3"/>
<path d="M1110.4,719.8L1105.8,729.2" stroke="#ee6b22" stroke-width="1.3"/>
<path d="M1114.3,727.4L1109.4,736.2" stroke="#ee6b22" stroke-width="1.3"/>
<path d="M1117.6,736.1L1112.5,744.3" stroke="#ee6b22" stroke-width="1.3"/>
<path d="M1120.3,745.9L1114.9,753.3" stroke="#ee6b22" stroke-width="1.3"/>
<path d="M1122.2,756.6L1116.7,763.2" stroke="#ee6b22" stroke-width="1.3"/>
<path d="M1123.4,768.1L1117.8,773.8" stroke="#ee6b22" stroke-width="1.3"/>
<path d="M1123.9,780.4L1118.3,785.2" stroke="#ee6b22" stroke-width="1.3"/>
<path d="M1123.7,793.3L1118.1,797.1" stroke="#ee6b22" stroke-width="1.3"/>
<path d="M1122.8,806.7L1117.2,809.5" stroke="#ee6b22" stroke-width="1.3"/>
<path d="M1121.1,820.4L1115.7,822.2" stroke="#ee6b22" stroke-width="1.3"/>
<path d="M1118.8,834.4L1113.5,835.2" stroke="#ee6b22" stroke-width="1.3"/>
<path d="M1115.7,848.5L1110.7,848.2" stroke="#ee6b22" stroke-width="1.3"/>
<path d="M1112.1,862.5L1107.3,861.2" stroke="#ee6b22" stroke-width="1.3"/>
<path d="M1107.8,876.4L1103.3,874.0" stroke="#ee6b22" stroke-width="1.3"/>
<path d="M1102.9,889.9L1098.8,886.5" stroke="#ee6b22" stroke-width="1.3"/>
<path d="M1097.5,903.0L1093.9,898.7" stroke="#ee6b22" stroke-width="1.3"/>
<path d="M1091.7,915.6L1088.5,910.3" stroke="#ee6b22" stroke-width="1.3"/>
<path d="M1085.4,927.5L1082.7,921.2" stroke="#ee6b22" stroke-width="1.3"/>
<path d="M1078.8,938.5L1076.5,931.5" stroke="#ee6b22" stroke-width="1.3"/>
<path d="M1071.9,948.7L1070.1,940.9" stroke="#ee6b22" stroke-width="1.3"/>
<path d="M1064.8,957.8L1063.5,949.3" stroke="#ee6b22" stroke-width="1.3"/>
<path d="M1057.5,965.9L1056.8,956.8" stroke="#ee6b22" stroke-width="1.3"/>
<path d="M1050.1,972.8L1050.0,963.2" stroke="#ee6b22" stroke-width="1.3"/>
<path d="M1042.7,978.5L1043.1,968.4" stroke="#ee6b22" stroke-width="1.3"/>
<path d="M1035.4,982.8L1036.3,972.4" stroke="#ee6b22" stroke-width="1.3"/>
<path d="M1028.1,985.8L1029.7,975.2" stroke="#ee6b22" stroke-width="1.3"/>
<path d="M1021.1,987.5L1023.2,976.8" stroke="#ee6b22" stroke-width="1.3"/>
<path d="M1014.4,987.8L1017.0,977.1" stroke="#ee6b22" stroke-width="1.3"/>
<path d="M1008.0,986.7L1011.0,976.0" stroke="#ee6b22" stroke-width="1.3"/>
<path d="M1001.9,984.3L1005.4,973.8" stroke="#ee6b22" stroke-width="1.3"/>
<path d="M996.4,980.4L1000.3,970.2" stroke="#ee6b22" stroke-width="1.3"/>
<path d="M991.3,975.3L995.6,965.5" stroke="#ee6b22" stroke-width="1.3"/>
<path d="M986.8,969.0L991.4,959.6" stroke="#ee6b22" stroke-width="1.3"/>
<path d="M982.9,961.4L987.8,952.6" stroke="#ee6b22" stroke-width="1.3"/>
<path d="M979.6,952.7L984.7,944.5" stroke="#ee6b22" stroke-width="1.3"/>
<path d="M976.9,942.9L982.3,935.5" stroke="#ee6b22" stroke-width="1.3"/>
<path d="M975.0,932.2L980.5,925.6" stroke="#ee6b22" stroke-width="1.3"/>
<path d="M973.8,920.7L979.4,915.0" stroke="#ee6b22" stroke-width="1.3"/>
<path d="M973.3,908.4L978.9,903.6" stroke="#ee6b22" stroke-width="1.3"/>
<path d="M973.5,895.5L979.1,891.7" stroke="#ee6b22" stroke-width="1.3"/>
<path d="M974.4,882.1L980.0,879.3" stroke="#ee6b22" stroke-width="1.3"/>
<path d="M976.1,868.4L981.5,866.6" stroke="#ee6b22" stroke-width="1.3"/>
<path d="M978.4,854.4L983.7,853.6" stroke="#ee6b22" stroke-width="1.3"/>
<path d="M981.5,840.3L986.5,840.6" stroke="#ee6b22" stroke-width="1.3"/>
<path d="M985.1,826.3L989.9,827.6" stroke="#ee6b22" stroke-width="1.3"/>
<path d="M989.4,812.4L993.9,814.8" stroke="#ee6b22" stroke-width="1.3"/>
<path d="M994.3,798.9L998.4,802.3" stroke="#ee6b22" stroke-width="1.3"/>
<path d="M999.7,785.8L1003.3,790.1" stroke="#ee6b22" stroke-width="1.3"/>
<path d="M1005.5,773.2L1008.7,778.5" stroke="#ee6b22" stroke-width="1.3"/>
<path d="M1011.8,761.3L1014.5,767.6" stroke="#ee6b22" stroke-width="1.3"/>
<path d="M1018.4,750.3L1020.7,757.3" stroke="#ee6b22" stroke-width="1.3"/>
<path d="M1025.3,740.1L1027.1,747.9" stroke="#ee6b22" stroke-width="1.3"/>
<path d="M1032.4,731.0L1033.7,739.5" stroke="#ee6b22" stroke-width="1.3"/>
<path d="M1039.7,722.9L1040.4,732.0" stroke="#ee6b22" stroke-width="1.3"/>
<path d="M1047.1,716.0L1047.2,725.6" stroke="#ee6b22" stroke-width="1.3"/>
<path d="M1054.5,710.3L1054.1,720.4" stroke="#ee6b22" stroke-width="1.3"/>
<path d="M1061.8,706.0L1060.9,716.4" stroke="#ee6b22" stroke-width="1.3"/>
<path d="M1069.1,703.0L1067.5,713.6" stroke="#ee6b22" stroke-width="1.3"/>
<path d="M1076.1,701.3L1074.0,712.0" stroke="#ee6b22" stroke-width="1.3"/>
<path d="M1082.8,701.0L1080.2,711.7" stroke="#ee6b22" stroke-width="1.3"/>
<polygon points="1086.2,712.8 1089.2,713.8 1092.1,715.2 1094.9,717.0 1097.6,719.1 1100.1,721.6 1102.5,724.4 1104.7,727.5 1106.8,731.0 1108.7,734.7 1110.5,738.8 1112.1,743.1 1113.5,747.7 1114.7,752.6 1115.8,757.8 1116.7,763.2 1117.4,768.8 1117.9,774.6 1118.2,780.6 1118.3,786.8 1118.2,793.1 1118.0,799.6 1117.5,806.2 1116.9,812.9 1116.0,819.7 1115.0,826.5 1113.8,833.4 1112.5,840.4 1110.9,847.3 1109.2,854.2 1107.3,861.2 1105.3,868.0 1103.1,874.8 1100.7,881.5 1098.2,888.2 1095.6,894.7 1092.8,901.0 1089.9,907.2 1086.9,913.3 1083.8,919.1 1080.7,924.7 1077.4,930.2 1074.0,935.3 1070.6,940.3 1067.1,944.9 1063.5,949.3 1060.0,953.4 1056.3,957.3 1052.7,960.8 1049.1,963.9 1045.4,966.8 1041.8,969.3 1038.1,971.5 1034.6,973.3 1031.0,974.8 1027.5,975.9 1024.0,976.7 1020.7,977.0 1017.4,977.1 1014.1,976.7 1011.0,976.0 1008.0,975.0 1005.1,973.6 1002.3,971.8 999.6,969.7 997.1,967.2 994.7,964.4 992.5,961.3 990.4,957.8 988.5,954.1 986.7,950.0 985.1,945.7 983.7,941.1 982.5,936.2 981.4,931.0 980.5,925.6 979.8,920.0 979.3,914.2 979.0,908.2 978.9,902.0 979.0,895.7 979.2,889.2 979.7,882.6 980.3,875.9 981.2,869.1 982.2,862.3 983.4,855.4 984.7,848.4 986.3,841.5 988.0,834.6 989.9,827.6 991.9,820.8 994.1,814.0 996.5,807.3 999.0,800.6 1001.6,794.1 1004.4,787.8 1007.3,781.6 1010.3,775.5 1013.4,769.7 1016.5,764.1 1019.8,758.6 1023.2,753.5 1026.6,748.5 1030.1,743.9 1033.7,739.5 1037.2,735.4 1040.9,731.5 1044.5,728.0 1048.1,724.9 1051.8,722.0 1055.4,719.5 1059.1,717.3 1062.6,715.5 1066.2,714.0 1069.7,712.9 1073.2,712.1 1076.5,711.8 1079.8,711.7 1083.1,712.1" fill="none" stroke="#ee6b22" stroke-width="1"/>
</g>
<linearGradient id="shd" gradientUnits="userSpaceOnUse" x1="700" y1="626" x2="720.6" y2="660.3"><stop offset="0" stop-color="#2d1203" stop-opacity="0.8"/><stop offset="0.35" stop-color="#3a1705" stop-opacity="0.4"/><stop offset="1" stop-color="#3a1705" stop-opacity="0"/></linearGradient>
<polygon points="692,631.5 741,604 800,621 752,649.7" fill="url(#shd)"/>
<g id="plate" stroke="#ff1717" stroke-width="1.1" stroke-linejoin="round">
<polygon points="1011.7,806.6 1109.3,723.7 1109.3,888.3 1011.7,974.0" fill="rgba(115,8,6,0.32)"/>
<polygon points="1018.9,808.7 1116.5,725.8 1116.5,890.4 1018.9,976.1" fill="rgba(115,8,6,0.30)"/>
<path d="M1011.7,806.6L1018.9,808.7"/>
<path d="M1109.3,723.7L1116.5,725.8"/>
<path d="M1109.3,888.3L1116.5,890.4"/>
<path d="M1011.7,974.0L1018.9,976.1"/>
</g>
<clipPath id="d1c"><polygon points="600.0,560.0 607.4,598.4 609.8,607.7 616.0,614.5 624.9,620.5 640.0,626.0 657.4,629.8 672.0,630.0 683.0,628.6 699.3,626.3 712.0,619.0 726.0,609.0 850.0,540.0 870.0,440.0 780.0,430.0 600.0,560.0"/></clipPath>
<g id="d1" clip-path="url(#d1c)">
<polygon points="829.2,534.2 617.6,683.0 609.1,686.2 820.2,537.6" fill="#3a4a60" stroke="#3a4a60" stroke-width="0.6"/>
<polygon points="820.2,537.6 609.1,686.2 597.7,685.0 808.1,536.2" fill="#3f5069" stroke="#3f5069" stroke-width="0.6"/>
<polygon points="808.1,536.2 597.7,685.0 586.0,678.7 795.9,529.6" fill="#42546f" stroke="#42546f" stroke-width="0.6"/>
<polygon points="795.9,529.6 586.0,678.7 575.9,668.4 785.2,518.8" fill="#5f7a9e" stroke="#5f7a9e" stroke-width="0.6"/>
<polygon points="785.2,518.8 575.9,668.4 568.9,655.7 777.8,505.4" fill="#7a9bc8" stroke="#7a9bc8" stroke-width="0.6"/>
<polygon points="777.8,505.4 568.9,655.7 566.0,642.4 774.8,491.4" fill="#8bb0e0" stroke="#8bb0e0" stroke-width="0.6"/>
<polygon points="774.8,491.4 566.0,642.4 567.8,630.7 776.7,479.0" fill="#8fb3e3" stroke="#8fb3e3" stroke-width="0.6"/>
<polygon points="776.7,479.0 567.8,630.7 573.8,622.2 783.1,470.1" fill="#84a6d4" stroke="#84a6d4" stroke-width="0.6"/>
<polygon points="783.1,470.1 573.8,622.2 574.8,621.5 784.0,469.4" fill="#7e9fcc" stroke="#7e9fcc" stroke-width="0.6"/>
<path d="M829.2,534.2L617.6,683.0" stroke="#9ccafc" stroke-width="1.1" fill="none"/>
<path d="M820.2,537.6L609.1,686.2" stroke="#9ccafc" stroke-width="1.1" fill="none"/>
<path d="M808.1,536.2L597.7,685.0" stroke="#9ccafc" stroke-width="1.1" fill="none"/>
<path d="M795.9,529.6L586.0,678.7" stroke="#9ccafc" stroke-width="1.1" fill="none"/>
<path d="M785.2,518.8L575.9,668.4" stroke="#9ccafc" stroke-width="1.1" fill="none"/>
<path d="M777.8,505.4L568.9,655.7" stroke="#9ccafc" stroke-width="1.1" fill="none"/>
<path d="M774.8,491.4L566.0,642.4" stroke="#9ccafc" stroke-width="1.1" fill="none"/>
<path d="M776.7,479.0L567.8,630.7" stroke="#9ccafc" stroke-width="1.1" fill="none"/>
<path d="M783.1,470.1L573.8,622.2" stroke="#9ccafc" stroke-width="1.1" fill="none"/>
<path d="M784.0,469.4L574.8,621.5" stroke="#9ccafc" stroke-width="1.1" fill="none"/>
</g>
<polyline points="607.4,598.4 609.8,607.7 616.0,614.5 624.9,620.5 640.0,626.0 657.4,629.8 672.0,630.0 683.0,628.6 699.3,626.3" fill="none" stroke="#6d8fbd" stroke-width="1"/>
<polygon points="830.1,533.5 820.2,537.6 808.1,536.2 795.9,529.6 785.2,518.8 777.8,505.4 774.8,491.4 776.7,479.0 783.1,470.1 793.0,466.0 805.1,467.4 817.3,474.0 828.0,484.8 835.4,498.2 838.4,512.2 836.5,524.6" fill="#5f7ea6" stroke="#9ccafc" stroke-width="1"/>
<clipPath id="d1in"><polygon points="827.8,530.3 818.8,534.0 808.0,532.8 796.9,526.9 787.4,517.1 780.7,505.0 778.0,492.5 779.7,481.3 785.4,473.3 794.4,469.6 805.2,470.8 816.3,476.7 825.8,486.5 832.5,498.6 835.2,511.1 833.5,522.3"/></clipPath>
<g clip-path="url(#d1in)">
<polygon points="761.3,576.7 829.4,529.2 830.3,528.6 762.2,576.1" fill="#80a1ce" stroke="#80a1ce" stroke-width="0.6"/>
<polygon points="762.2,576.1 830.3,528.6 836.0,520.6 767.9,568.0" fill="#80a1ce" stroke="#80a1ce" stroke-width="0.6"/>
<polygon points="767.9,568.0 836.0,520.6 837.7,509.4 769.6,556.9" fill="#7d9dca" stroke="#7d9dca" stroke-width="0.6"/>
<polygon points="769.6,556.9 837.7,509.4 834.9,496.8 766.9,544.3" fill="#7090bb" stroke="#7090bb" stroke-width="0.6"/>
<polygon points="766.9,544.3 834.9,496.8 828.3,484.8 760.2,532.2" fill="#5f7da3" stroke="#5f7da3" stroke-width="0.6"/>
<polygon points="760.2,532.2 828.3,484.8 818.7,475.0 750.7,522.5" fill="#4e6585" stroke="#4e6585" stroke-width="0.6"/>
<polygon points="750.7,522.5 818.7,475.0 807.7,469.1 739.6,516.6" fill="#36455a" stroke="#36455a" stroke-width="0.6"/>
<polygon points="739.6,516.6 807.7,469.1 796.8,467.9 728.8,515.4" fill="#2f3d50" stroke="#2f3d50" stroke-width="0.6"/>
<polygon points="728.8,515.4 796.8,467.9 788.7,470.9 720.7,518.4" fill="#2c394b" stroke="#2c394b" stroke-width="0.6"/>
<path d="M762.2,576.1L827.8,530.3" stroke="#8fc0fb" stroke-width="1.2" fill="none"/>
<path d="M767.9,568.0L833.5,522.3" stroke="#8fc0fb" stroke-width="1.2" fill="none"/>
<path d="M769.6,556.9L835.2,511.1" stroke="#8fc0fb" stroke-width="1.2" fill="none"/>
<path d="M766.9,544.3L832.5,498.6" stroke="#8fc0fb" stroke-width="1.2" fill="none"/>
<path d="M760.2,532.2L825.8,486.5" stroke="#8fc0fb" stroke-width="1.2" fill="none"/>
<path d="M750.7,522.5L816.3,476.7" stroke="#8fc0fb" stroke-width="1.2" fill="none"/>
<path d="M739.6,516.6L805.2,470.8" stroke="#8fc0fb" stroke-width="1.2" fill="none"/>
<path d="M728.8,515.4L794.4,469.6" stroke="#8fc0fb" stroke-width="1.2" fill="none"/>
<path d="M790,513.4L826,488.3" stroke="#9ec4f5" stroke-width="0.8" stroke-dasharray="4 3 1 3" fill="none"/>
</g>
<polygon points="827.8,530.3 818.8,534.0 808.0,532.8 796.9,526.9 787.4,517.1 780.7,505.0 778.0,492.5 779.7,481.3 785.4,473.3 794.4,469.6 805.2,470.8 816.3,476.7 825.8,486.5 832.5,498.6 835.2,511.1 833.5,522.3" fill="none" stroke="#9ccafc" stroke-width="1"/>
<path d="M830.1,533.5L827.8,530.3" stroke="#9ccafc" stroke-width="0.9"/>
<path d="M820.2,537.6L818.8,534.0" stroke="#9ccafc" stroke-width="0.9"/>
<path d="M808.1,536.2L808.0,532.8" stroke="#9ccafc" stroke-width="0.9"/>
<path d="M795.9,529.6L796.9,526.9" stroke="#9ccafc" stroke-width="0.9"/>
<path d="M785.2,518.8L787.4,517.1" stroke="#9ccafc" stroke-width="0.9"/>
<path d="M777.8,505.4L780.7,505.0" stroke="#9ccafc" stroke-width="0.9"/>
<path d="M774.8,491.4L778.0,492.5" stroke="#9ccafc" stroke-width="0.9"/>
<path d="M776.7,479.0L779.7,481.3" stroke="#9ccafc" stroke-width="0.9"/>
<path d="M783.1,470.1L785.4,473.3" stroke="#9ccafc" stroke-width="0.9"/>
<path d="M793.0,466.0L794.4,469.6" stroke="#9ccafc" stroke-width="0.9"/>
<path d="M805.1,467.4L805.2,470.8" stroke="#9ccafc" stroke-width="0.9"/>
<path d="M817.3,474.0L816.3,476.7" stroke="#9ccafc" stroke-width="0.9"/>
<path d="M828.0,484.8L825.8,486.5" stroke="#9ccafc" stroke-width="0.9"/>
<path d="M835.4,498.2L832.5,498.6" stroke="#9ccafc" stroke-width="0.9"/>
<path d="M838.4,512.2L835.2,511.1" stroke="#9ccafc" stroke-width="0.9"/>
<path d="M836.5,524.6L833.5,522.3" stroke="#9ccafc" stroke-width="0.9"/>
<path d="M150.5,202L256.3,338.8" stroke="#9ec4f5" stroke-width="0.9" stroke-dasharray="9 3 1.5 3" fill="none"/>
<path d="M829.5,484.4L915.6,424.4" stroke="#9ec4f5" stroke-width="0.9" stroke-dasharray="9 3 1.5 3" fill="none"/>
<path d="M1118,864.2L1205,889" stroke="#9ec4f5" stroke-width="0.9" stroke-dasharray="9 3 1.5 3" fill="none"/>
</svg>
<!--MODEL_END-->
<!--VIEW_UI-->
<div class="abs" style="left:1217px;top:158px;width:32px;height:32px;background:#e8e8e8;border-right:1px solid #d4d4d4"></div>
<div class="abs" style="left:1112px;top:160px;width:1px;height:28px;background:#d0d0d0"></div>
<svg width="300" height="34" viewBox="1040 158 300 34" style="left:1040px;top:158px" fill="none" stroke="#111" stroke-width="1.3">
<path d="M1052.8999999999999 167.4H1049.3V171.0M1049.3 167.4L1053.6 171.70000000000002M1059.2 167.4H1062.8V171.0M1062.8 167.4L1058.5 171.70000000000002M1052.8999999999999 180.7H1049.3V177.1M1049.3 180.7L1053.6 176.39999999999998M1059.2 180.7H1062.8V177.1M1062.8 180.7L1058.5 176.39999999999998" stroke-width="1.2"/>
<path d="M1079.3 168.4H1083.4V172.4M1083.4 168.4C1078 171.5 1075.5 176 1077.2 179.4C1078.3 181.4 1080.6 181.6 1082.6 180.6"/>
<path d="M1085.2 167.6C1088.5 166 1091.6 166.8 1091.8 170C1092 173.6 1089 177.5 1085.4 179.6M1085.4 175.4V179.6H1089.6"/>
<path d="M1100.2 172.8L1104 176.7L1107.9 172.8" stroke="#444"/>
<path d="M1120.4 166.3V178.4H1132.9M1117.3 169.3H1129.8V181.7" stroke="#c6c6c6" stroke-width="1.4"/>
<path d="M1141 172.8L1144.8 176.7L1148.7 172.8" stroke="#444"/>
<path d="M1161.3 171.6L1166.5 166.2H1177.1V176.29999999999998L1171.8999999999999 181.7H1161.3Z" stroke-width="1.35"/><path d="M1161.3 171.6H1171.8999999999999V181.7M1171.8999999999999 171.6L1177.1 166.2" stroke-width="1.35"/><path d="M1166.5 166.2V176.29999999999998H1170.1M1166.5 176.29999999999998L1161.3 181.7" stroke-width="1"/>
<path d="M1193.3 171.6L1198.5 166.2H1209.1V176.29999999999998L1203.8999999999999 181.7H1193.3Z" fill="#cfcfcf" stroke-width="1.35"/><path d="M1193.3 171.6H1203.8999999999999V181.7M1203.8999999999999 171.6L1209.1 166.2" stroke-width="1.35"/><path d="M1198.5 166.2V176.29999999999998H1202.1M1198.5 176.29999999999998L1193.3 181.7" stroke-width="1"/>
<path d="M1225 171.6L1230.2 166.2H1240.8V176.29999999999998L1235.6 181.7H1225Z" fill="#000" stroke="#000" stroke-width="1.2"/><path d="M1225 171.6H1235.6V181.7M1235.6 171.6L1240.8 166.2" stroke="#e8e8e8" stroke-width="0.9"/>
<path d="M1258.3 169.8L1266.6 168.1L1274 168.9V173.4L1263.9 179.8L1258.3 177.1ZM1258.3 169.8L1263.9 171.9L1274 168.9M1263.9 171.9V179.8" stroke-width="1.5" stroke-linejoin="round"/>
<path d="M1296.4 166V181.8M1299.6 166V181.8" stroke="#c8c8c8" stroke-width="1.1"/><path d="M1294 173.2C1288.5 174.4 1288.8 177.6 1294.5 178.2M1301.8 172.9C1307.6 173.8 1307.4 177.6 1301.8 178.3" stroke="#c8c8c8" stroke-width="1.1"/><path d="M1295.5 175.9L1292.2 178.2L1295.5 180.3Z" fill="#c8c8c8" stroke="none"/>
<path d="M1322.4 173.6L1330 167.4L1337.7 173.6M1324.2 172.4V180.5H1328.1V175.6H1332V180.5H1335.9V172.4" stroke-width="1.3"/>
</svg>
<div class="t" style="left:1091.5px;top:204.5px;font-weight:bold;color:#f37021;letter-spacing:-0.22px">Production cost</div>
<div class="t" style="left:1184.5px;top:204.5px;color:#000">-</div>
<div class="t" style="left:1195px;top:204.5px;font-weight:bold;color:#000;letter-spacing:-0.6px">0 US$</div>
<svg width="120" height="90" viewBox="1240 205 120 90" style="left:1240px;top:205px" fill="none">
<path fill-rule="evenodd" fill="#e2e2e2" d="M1263.2 263A37.8 21 0 1 0 1338.8 263A37.8 21 0 1 0 1263.2 263ZM1272 261A29 14.5 0 1 0 1330 261A29 14.5 0 1 0 1272 261Z"/>
<polygon points="1294.9,220.3 1325,226.4 1322,256 1308,274.3 1277.5,261.7 1274.4,231.6" fill="#b2b2b2"/>
<polygon points="1274.4,231.6 1294.9,220.3 1325,226.4 1309.3,240.3" fill="#b6b6b6"/>
<polygon points="1295.4,247.7 1322,256 1308,274.3 1277.5,261.7" fill="#a8a8a8"/>
<path d="M1294.9,220.3L1274.4,231.6L1309.3,240.3L1325,226.4ZM1274.4,231.6L1277.5,261.7L1308,274.3L1322,256L1325,226.4M1309.3,240.3L1308,274.3M1294.9,220.3L1295.4,247.7L1277.5,261.7M1295.4,247.7L1322,256" stroke="#7c7c7c" stroke-width="0.9"/>
<path d="M1299 229.5L1303.5 228" stroke="#fff" stroke-width="1.6"/><path d="M1317.5 246V250.5" stroke="#fff" stroke-width="1.2"/><path d="M1289 253L1291 255M1293 252.5L1294.5 257" stroke="#fff" stroke-width="1"/>
<path d="M1267 249.5L1275 246.5M1270.5 245.5L1272.5 250.5" stroke="#8a8a8a" stroke-width="1"/><path d="M1273 284L1278.5 277L1278 274.5M1278.5 277L1285 273.5" stroke="#8a8a8a" stroke-width="1.3"/><path d="M1330 268L1340 271.5" stroke="#8a8a8a" stroke-width="0.8" stroke-dasharray="2 1.2"/>
</svg>
<div class="abs" style="left:1199.5px;top:300px;width:0;height:0;border-left:5.5px solid transparent;border-bottom:5.5px solid #333"></div>
<div class="t" style="left:1218px;top:293.5px;font-weight:bold;color:#333">Tubular 3D frame1</div>
<div class="abs" style="left:1220px;top:321.5px;width:0;height:0;border-left:5.5px solid transparent;border-bottom:5.5px solid #333"></div>
<div class="t" style="left:1238px;top:315.5px;font-weight:bold;color:#333">Members</div>
<svg width="112" height="22" style="left:1232px;top:335px"><path d="M0 0H94.5L110 10.5L94.5 21H0Z" fill="#f37021"/></svg>
<div class="abs" style="left:1238px;top:341px;width:11px;height:11px;border-radius:2px;background:#e9e9e9"></div>
<svg width="14" height="14" style="left:1238px;top:338px"><path d="M2.6 8.2L5.2 11L10.6 3.4" fill="none" stroke="#f37021" stroke-width="1.9"/></svg>
<div class="t" style="left:1260px;top:340px;color:#fff;text-decoration:underline">CH</div>
<div class="t" style="left:1260px;top:362px;color:#444">D1</div>
<div class="t" style="left:1260px;top:384px;color:#444">D2</div>
<div class="t" style="left:1238px;top:404px;font-weight:bold;color:#333;letter-spacing:-0.22px">Load effects</div>
<div class="t" style="left:1260px;top:427.5px;color:#444">LE1</div>
<div class="abs" style="left:1167px;top:354px;width:88px;height:106px;background:#fff;border:1px solid #b4b4b4"></div>
<div class="abs" style="left:1168px;top:355px;width:86px;height:24.5px;background:#f79468"></div>
<svg width="16" height="16" style="left:1170px;top:361px" fill="none"><path d="M6.2 1.2H14V12.4" stroke="#f37021" stroke-width="1"/><path d="M6 2.6H12.8V14.2H2.4V6.2Z" stroke="#111" stroke-width="1.3" fill="#f79468"/><path d="M6 2.6V6.2H2.4" stroke="#111" stroke-width="1.1"/></svg>
<div class="t" style="left:1191px;top:361.5px;color:#222">Copy</div>
<div class="t" style="left:1191px;top:413.5px;color:#9a9a9a">Set bearing</div>
<div class="t" style="left:1191px;top:439.5px;color:#222;letter-spacing:-0.5px">Rename</div>
<svg width="10" height="18" style="left:1174px;top:437px" fill="none" stroke="#333" stroke-width="1.1"><path d="M2.5 1.5H7.5M5 1.5V15.5M2.5 15.5H7.5M3.5 12.5H6.5"/></svg>
<div class="abs" style="left:1095px;top:378px;width:132px;height:26px;background:#fff;border:1px solid #b0b0b0"></div>
<div class="t" style="left:1100px;top:385px;color:#444;letter-spacing:-0.09px">Copy selected member</div>
<div class="abs" style="left:1156px;top:325px;width:197px;height:59px;border:5px solid #f03e45;border-radius:9px"></div>
<div class="abs" style="left:348.5px;top:505.5px;width:23px;height:18px;background:#fff;font-size:12px;line-height:18px;text-align:center;color:#111">D2</div>
<div class="abs" style="left:657px;top:595px;width:21.5px;height:17.5px;background:#fff;font-size:12px;line-height:18px;text-align:center;color:#111">D1</div>
<div class="abs" style="left:719px;top:829px;width:22px;height:18px;background:#fff;font-size:12px;line-height:18px;text-align:center;color:#111">CH</div>
</div>
<div id="split"></div>
<div id="rp"><div id="rph"><div class="t" style="left:10px;top:6px;font-weight:bold;color:#fff">CH</div><div class="t" style="left:36.5px;top:6px;color:#fff">[Bearing member]</div><div class="t" style="left:474px;top:6px;font-weight:bold;color:#fff;letter-spacing:-0.4px">Copy</div><div class="t" style="left:511px;top:6px;font-weight:bold;color:#fff;letter-spacing:0.38px">Delete</div></div>
<div class="tri" style="top:46.30000000000001px"></div><div class="h" style="top:42.30000000000001px">Properties</div>
<div class="l" style="top:69px;letter-spacing:-0.23px">Cross-section</div>
<div class="f" style="top:65px;width:353px"><span style="letter-spacing:-0.6px">4 - HSS12.75X.500</span><i></i></div>
<div class="abs" style="left:500px;top:65px;width:22px;height:22px;background:#9a9a9a"><svg width="22" height="22" style="left:0;top:0"><path d="M6.2 18.2L7.6 13.8L14.6 3.6L17.6 5.4L10.6 15.8Z" fill="#fff"/><path d="M13.8 4.8L16.8 6.6" stroke="#9a9a9a" stroke-width="0.8"/></svg></div>
<div class="abs" style="left:525px;top:65px;width:22px;height:22px;background:#9a9a9a"><div class="abs" style="left:3px;top:9px;width:16px;height:4px;background:#fff"></div><div class="abs" style="left:9px;top:3px;width:4px;height:16px;background:#fff"></div></div>
<div class="l" style="top:93px">Mirror Y</div>
<div class="cb" style="top:94px"></div>
<div class="l" style="top:117px">Mirror Z</div>
<div class="cb" style="top:118px"></div>
<div class="l" style="top:141px">Geometrical type</div>
<div class="f" style="top:137px"><span>Ended</span><i></i></div>
<div class="tri" style="top:171px"></div><div class="h" style="top:167px">Position</div>
<div class="l" style="top:194px">Defined by</div>
<div class="f" style="top:190px"><span>Rotations</span><i></i></div>
<div class="l" style="top:218px">β – Direction [°]</div>
<div class="f n" style="top:214px"><span>0.0</span></div>
<div class="l" style="top:242px">γ - Pitch [°]</div>
<div class="f n" style="top:238px"><span>0.0</span></div>
<div class="l" style="top:266px">α - Rotation [°]</div>
<div class="f n" style="top:262px"><span>0.0</span></div>
<div class="l" style="top:290px">Offset ex [in]</div>
<div class="f n" style="top:286px"><span>0.000</span></div>
<div class="l" style="top:314px">Offset ey [in]</div>
<div class="f n" style="top:310px"><span>0.000</span></div>
<div class="l" style="top:338px">Offset ez [in]</div>
<div class="f n" style="top:334px"><span>0.000</span></div>
<div class="l" style="top:362px">Align</div>
<div class="f" style="top:358px"><span>In node</span><i></i></div>
<div class="tri" style="top:392.4px"></div><div class="h" style="top:388.4px">Model</div>
<div class="l" style="top:415px">Model type</div>
<div class="f" style="top:411px"><span style="letter-spacing:0.3px">N-Vy-Vz-Mx-My-Mz</span><i></i></div>
<div class="l" style="top:439px">Forces in</div>
<div class="f" style="top:435px"><span>Node</span><i></i></div>
<div class="abs" style="left:10.5px;top:488.5px;width:370px;line-height:15px;font-size:12px;letter-spacing:-0.07px;color:#444">One member of the joint is considered as 'bearing'. The other ones<br>are 'connected'. The support in analysis model is applied on the<br>bearing member.</div>
</div>
<div id="stat">
<svg width="1920" height="32" style="left:0;top:0"><rect width="1920" height="32" fill="#0f0f0f"/><rect width="1920" height="32" filter="url(#brush)" opacity="0.2"/></svg>
<div class="t" style="left:23.5px;color:#777;letter-spacing:-0.45px">Design code:</div><div class="t" style="left:99px;color:#fff">AISC - LRFD (2022)</div>
<div class="t" style="left:224px;color:#777;letter-spacing:-0.8px">Analysis:</div><div class="t" style="left:275px;color:#fff">Stress, strain</div>
<div class="t" style="left:366px;color:#777;letter-spacing:-0.2px">Load effects:</div><div class="t" style="left:443px;color:#fff;letter-spacing:-0.12px">In equilibrium</div>
<div class="t" style="left:540px;color:#777">Units:</div><div class="t" style="left:580px;color:#fff">in</div>
<div class="t" style="left:1796px;color:#f37021;font-weight:normal;letter-spacing:0.36px">www.<span style="color:#fff">ideastatica</span>.com</div>
</div>
</body>
</html>
